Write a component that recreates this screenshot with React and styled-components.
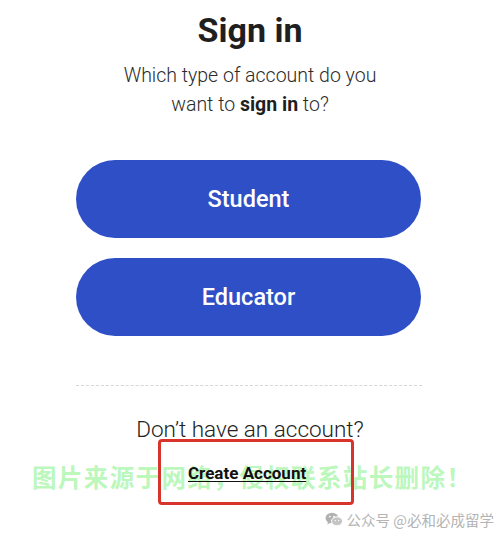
import React from "react";
import styled, { createGlobalStyle } from "styled-components";

const GlobalStyle = createGlobalStyle`
  html, body {
    margin: 0;
    padding: 0;
    background: #ffffff;
  }
  body {
    font-family: Roboto, "Liberation Sans", sans-serif;
    color: #222;
  }
`;

const Page = styled.div`
  position: relative;
  width: 500px;
  height: 543px;
  overflow: hidden;
  display: flex;
  flex-direction: column;
  align-items: center;
  background: #fff;
`;

const Title = styled.h1`
  margin: 10px 0 0;
  font-size: 34px;
  line-height: 40px;
  font-weight: 700;
  color: #1f1f1f;
`;

const Subtitle = styled.p`
  margin: 11px 0 0;
  font-size: 19.5px;
  line-height: 29px;
  font-weight: 300;
  color: #2b2b2b;
  text-align: center;

  strong {
    font-weight: 700;
    color: #1f1f1f;
  }
`;

const ButtonStack = styled.div`
  display: flex;
  flex-direction: column;
  gap: 20px;
  margin-top: 41px;
  margin-left: -3px;
`;

const RoleButton = styled.button`
  width: 345px;
  height: 78px;
  border: none;
  border-radius: 39px;
  background: #2f4fc6;
  color: #fff;
  font-family: Roboto, "Liberation Sans", sans-serif;
  font-size: 23.5px;
  font-weight: 500;
  cursor: pointer;
`;

const Divider = styled.hr`
  width: 346px;
  margin: 49px 0 0 -3px;
  border: none;
  border-top: 1px dashed #d6d6d6;
`;

const Prompt = styled.p`
  margin: 28px 0 0;
  font-size: 22.5px;
  line-height: 30px;
  font-weight: 300;
  color: #222;
`;

const Highlight = styled.div`
  box-sizing: border-box;
  width: 196px;
  height: 66px;
  margin: -5px 0 0 12px;
  border: 3px solid #d8342c;
  border-radius: 4px;
  padding: 0 0 0 27px;
  display: flex;
  align-items: center;
  position: relative;
  z-index: 2;
`;

const CreateLink = styled.a`
  font-size: 17px;
  font-weight: 700;
  color: #111;
  text-decoration: underline;
  text-underline-offset: 2px;
  margin-top: 2px;
`;

const Watermark = styled.div`
  position: absolute;
  left: 32px;
  top: 459px;
  font-family: "Noto Sans CJK SC", sans-serif;
  font-size: 24.5px;
  font-weight: 700;
  letter-spacing: 1.4px;
  color: rgba(130, 240, 130, 0.55);
  white-space: nowrap;
  z-index: 1;
`;

const SourceTag = styled.div`
  position: absolute;
  right: 6px;
  bottom: 13px;
  display: flex;
  align-items: center;
  gap: 4px;
  font-family: "Noto Sans CJK SC", sans-serif;
  font-size: 14.5px;
  color: #b4b4b4;
  white-space: nowrap;
`;

function WeChatIcon() {
  return (
    <svg width="18" height="15" viewBox="0 0 18 15">
      <ellipse cx="7" cy="6" rx="6.5" ry="5.3" fill="#b0b0b0" />
      <path d="M3 10 L2.2 12.5 L5.5 10.8 Z" fill="#b0b0b0" />
      <ellipse cx="12" cy="9.3" rx="5.5" ry="4.5" fill="#c4c4c4" stroke="#fff" strokeWidth="1" />
      <circle cx="4.8" cy="4.6" r="0.9" fill="#fff" />
      <circle cx="9" cy="4.6" r="0.9" fill="#fff" />
      <circle cx="10.3" cy="8.6" r="0.7" fill="#fff" />
      <circle cx="13.7" cy="8.6" r="0.7" fill="#fff" />
    </svg>
  );
}

export default function App() {
  return (
    <>
      <GlobalStyle />
      <Page>
        <Title>Sign in</Title>
        <Subtitle>
          Which type of account do you
          <br />
          want to <strong>sign in</strong> to?
        </Subtitle>

        <ButtonStack>
          <RoleButton>Student</RoleButton>
          <RoleButton>Educator</RoleButton>
        </ButtonStack>

        <Divider />

        <Prompt>Don’t have an account?</Prompt>
        <Highlight>
          <CreateLink href="#">Create Account</CreateLink>
        </Highlight>

        <Watermark>图片来源于网络，侵权联系站长删除！</Watermark>
        <SourceTag>
          <WeChatIcon />
          公众号 @必和必成留学
        </SourceTag>
      </Page>
    </>
  );
}
